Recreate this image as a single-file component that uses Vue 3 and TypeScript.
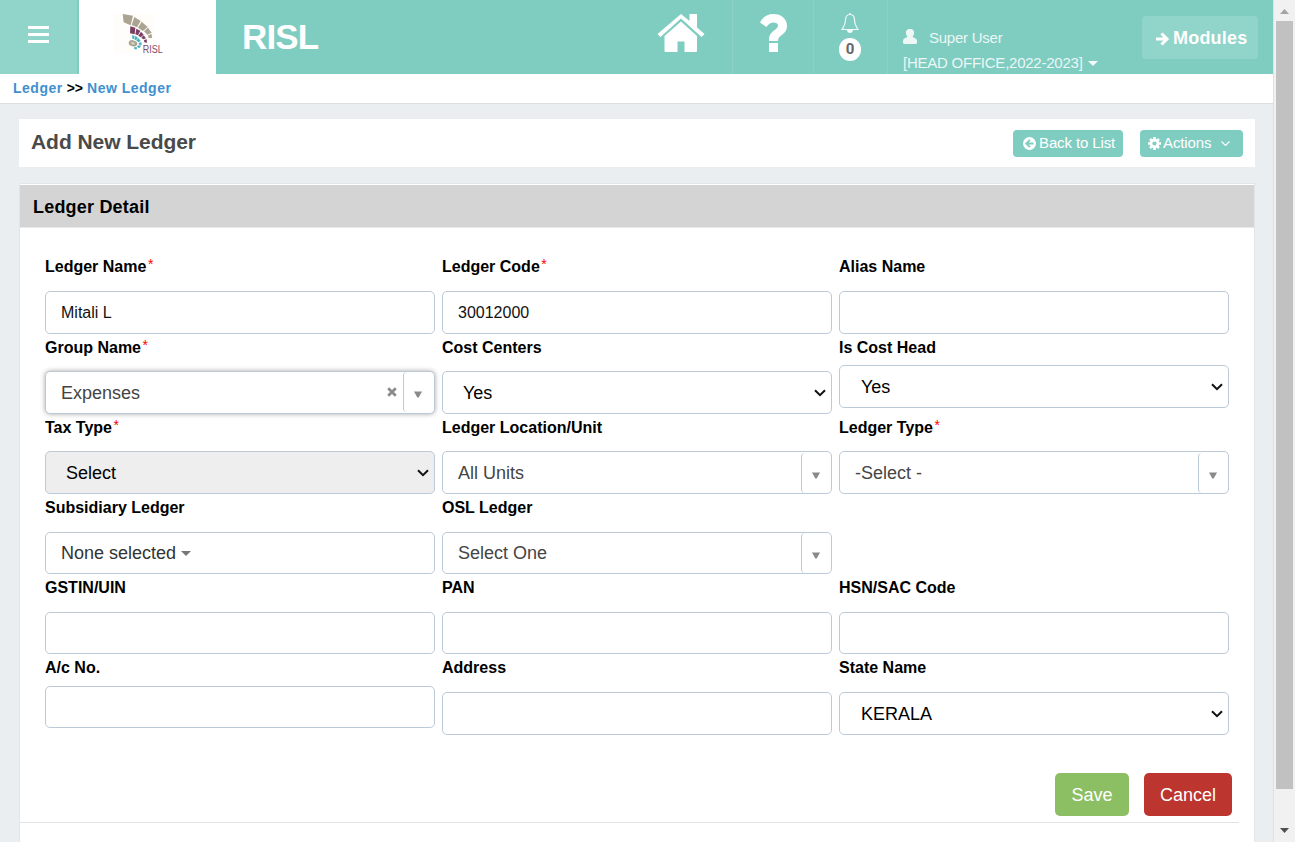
<script setup lang="ts">
type Kind = 'input' | 'native' | 'combo' | 'multi' | 'none'

interface Field {
  label: string
  kind: Kind
  value?: string
  required?: boolean
  disabled?: boolean
  focused?: boolean
  raised?: boolean
}

const fields: Field[] = [
  { label: 'Ledger Name', kind: 'input', value: 'Mitali L', required: true },
  { label: 'Ledger Code', kind: 'input', value: '30012000', required: true },
  { label: 'Alias Name', kind: 'input' },
  { label: 'Group Name', kind: 'combo', value: 'Expenses', required: true, focused: true },
  { label: 'Cost Centers', kind: 'native', value: 'Yes' },
  { label: 'Is Cost Head', kind: 'native', value: 'Yes', raised: true },
  { label: 'Tax Type', kind: 'native', value: 'Select', required: true, disabled: true },
  { label: 'Ledger Location/Unit', kind: 'combo', value: 'All Units' },
  { label: 'Ledger Type', kind: 'combo', value: '-Select -', required: true },
  { label: 'Subsidiary Ledger', kind: 'multi', value: 'None selected' },
  { label: 'OSL Ledger', kind: 'combo', value: 'Select One' },
  { label: '', kind: 'none' },
  { label: 'GSTIN/UIN', kind: 'input' },
  { label: 'PAN', kind: 'input' },
  { label: 'HSN/SAC Code', kind: 'input' },
  { label: 'A/c No.', kind: 'input', raised: true },
  { label: 'Address', kind: 'input' },
  { label: 'State Name', kind: 'native', value: 'KERALA' },
]
</script>

<template>
  <div class="screen">
    <div class="page">
      <header class="topbar">
        <div class="menu">
          <svg width="21" height="17" viewBox="0 0 21 17"><path d="M0 0h21v3H0zM0 7h21v3H0zM0 14h21v3H0z" fill="#fff" /></svg>
        </div>
        <div class="logo">
          <svg width="70" height="50" viewBox="40 40 210 150">
            <rect x="42" y="42" width="122" height="118" fill="#fefdfa" />
            <g fill="#aca493">
              <path d="M69 43L100 48L93 77L72 68z" />
              <path d="M104 52L123 64L112 83L96 76z" />
              <path d="M126 66L144 82L130 94L115 84z" />
              <path d="M145 84L156 99L143 105L133 95z" />
              <path d="M145 107L156 103L157 115L147 115z" />
            </g>
            <g fill="#7b3f65">
              <path d="M92 80L107 84L105 104L91 101z" />
              <path d="M110 87L122 93L115 107L107 104z" />
              <path d="M124 96L132 105L123 113L116 108z" />
              <path d="M132 107L139 116L131 119L125 114z" />
              <path d="M133 121L141 119L142 129L134 128z" />
            </g>
            <g fill="#46b2c4">
              <path d="M97 107L105 108L103 118L98 117z" />
              <path d="M107 109L115 114L109 122L104 119z" />
              <path d="M116 115L123 123L117 128L110 123z" />
              <path d="M117 130L125 127L126 136L118 135z" />
              <path d="M116 137L124 138L119 146L112 141z" />
              <path d="M103 143L111 142L112 149L104 149z" />
            </g>
            <ellipse cx="100" cy="131" rx="13" ry="9" transform="rotate(15 100 131)" fill="#aca493" />
            <ellipse cx="100" cy="131" rx="6" ry="3.5" transform="rotate(15 100 131)" fill="#d8d2c6" />
            <text x="129" y="160" font-size="35" textLength="60" lengthAdjust="spacingAndGlyphs" fill="#7d4a6c" font-family="Liberation Sans, Arial, sans-serif">RISL</text>
          </svg>
        </div>
        <h1 class="brand">RISL</h1>
        <div class="cell home">
          <svg width="48" height="40" viewBox="0 0 48 40" fill="#fff">
            <path d="M24 1L32.500 8V1H40V14.500L47.500 21L44.500 24L24 5.500L3.500 24L0.500 21z" />
            <path d="M24 8.500L40 23V38Q40 39 39 39H27.500V28.500H20.500V39H8.500Q7.500 39 7.500 38V23z" />
          </svg>
        </div>
        <div class="cell help">
          <svg width="29" height="40" viewBox="0 0 29 40" fill="#fff">
            <path d="M1 9.500C4 4 8 1 14.500 1C22 1 28 5.500 28 13C28 18 25 20.500 21.500 23C19.500 24.500 19 26 19 28H10V26C10 22 12 20 15 17.500C17.500 15.500 19 14.500 19 12.500C19 10.500 17 9.500 14.500 9.500C11.500 9.500 9.500 11 7.500 14z" />
            <path d="M10 30h9v9h-9z" />
          </svg>
        </div>
        <div class="cell alerts">
          <svg class="bell" width="18" height="21" viewBox="0 0 18 21">
            <path d="M9 1.500C6 1.500 4.500 4 4.500 7C4.500 12 3 13.500 1 16.500H17C15 13.500 13.500 12 13.500 7C13.500 4 12 1.500 9 1.500z" fill="none" stroke="#f1faf8" stroke-width="1.200" />
            <path d="M8.300 0h1.400v2H8.300zM6 17h6c0 4-6 4-6 0z" fill="#f1faf8" />
          </svg>
          <span class="count">0</span>
        </div>
        <div class="cell user">
          <div class="who">
            <svg width="14" height="15" viewBox="0 0 14 15" fill="#edf8f6"><path d="M7 0C10 0 11.500 2 11 4.500C10.800 6 10 7 9.500 8C12 9 14 9.500 14 12V13.500Q14 15 12.500 15H1.500Q0 15 0 13.500V12C0 9.500 2 9 4.500 8C4 7 3.200 6 3 4.500C2.500 2 4 0 7 0z" /></svg>
            <span>Super User</span>
          </div>
          <div class="office"><span>[HEAD OFFICE,2022-2023]</span><i class="tri"></i></div>
        </div>
        <button class="modules">
          <svg width="13" height="14" viewBox="0 0 13 14"><path d="M0 7H11M5.500 1.500L11 7L5.500 12.500" fill="none" stroke="#fff" stroke-width="3" /></svg>
          <span>Modules</span>
        </button>
      </header>

      <nav class="crumbs"><a>Ledger</a><b>&gt;&gt;</b><a>New Ledger</a></nav>

      <section class="titlebar">
        <h2>Add New Ledger</h2>
        <button class="tool back">
          <svg width="13" height="13" viewBox="0 0 13 13"><circle cx="6.500" cy="6.500" r="6.500" fill="#fff" /><path d="M10.500 6.500H3.500M7 2.800L3.300 6.500L7 10.200" fill="none" stroke="#7fccc1" stroke-width="1.900" /></svg>
          <span>Back to List</span>
        </button>
        <button class="tool actions">
          <svg width="13" height="13" viewBox="0 0 13 13"><g stroke="#fff" stroke-width="2.600"><path d="M6.500 0V13M0 6.500H13M2 2L11 11M11 2L2 11" /></g><circle cx="6.500" cy="6.500" r="4.700" fill="#fff" /><circle cx="6.500" cy="6.500" r="2.100" fill="#7fccc1" /></svg>
          <span>Actions</span>
          <svg class="angle" width="9" height="6" viewBox="0 0 9 6"><path d="M0.500 0.500L4.500 4.500L8.500 0.500" fill="none" stroke="#fff" stroke-width="1.100" /></svg>
        </button>
      </section>

      <section class="panel">
        <h3>Ledger Detail</h3>
        <div class="grid">
          <div v-for="(f, i) in fields" :key="i" class="field" :class="{ raised: f.raised }">
            <template v-if="f.kind !== 'none'">
              <label>{{ f.label }}<sup v-if="f.required">*</sup></label>
              <div class="box" :class="[f.kind, { disabled: f.disabled, focused: f.focused }]">
                <span class="value">{{ f.value }}</span>
                <svg v-if="f.kind === 'native'" class="chev" width="12" height="8" viewBox="0 0 12 8"><path d="M1 1.200L6 6.200L11 1.200" fill="none" stroke="#111" stroke-width="2" /></svg>
                <i v-if="f.kind === 'multi'" class="tri grey"></i>
                <svg v-if="f.focused" class="clear" width="10" height="10" viewBox="0 0 10 10"><path d="M1.200 1.200L8.800 8.800M8.800 1.200L1.200 8.800" stroke="#8b8b8b" stroke-width="2.800" /></svg>
                <div v-if="f.kind === 'combo'" class="drop">
                  <svg width="8" height="7" viewBox="0 0 8 7"><path d="M0 0.500H8L4.700 6.500H3.300z" fill="#8a8a8a" /></svg>
                </div>
              </div>
            </template>
          </div>
        </div>
        <div class="buttons">
          <button class="save">Save</button>
          <button class="cancel">Cancel</button>
        </div>
      </section>
    </div>

    <aside class="scroll">
      <svg width="9" height="5" viewBox="0 0 9 5"><path d="M0 5L4.500 0L9 5z" fill="#a3a3a3" /></svg>
      <div class="thumb"></div>
      <svg class="down" width="9" height="5" viewBox="0 0 9 5"><path d="M0 0L4.500 5L9 0z" fill="#505050" /></svg>
    </aside>
  </div>
</template>

<style>
body { margin: 0; overflow: hidden; }
</style>

<style scoped>
* { box-sizing: border-box; }
svg { display: block; flex: none; overflow: visible; }
h1, h2, h3 { margin: 0; }
button { border: 0; padding: 0; font-family: inherit; display: flex; align-items: center; color: #fff; }
.screen { display: flex; width: 1295px; height: 842px; overflow: hidden; background: #eaeef1; font-family: "Liberation Sans", Arial, sans-serif; color: #000; }
.page { width: 1273px; height: 842px; display: flex; flex-direction: column; overflow: hidden; }

.topbar { display: flex; flex: none; height: 74px; background: #7fccc1; }
.menu { width: 77px; background: #90d4ca; padding: 26px 0 0 28px; }
.logo { width: 137px; margin-left: 2px; background: #fff; padding: 13px 0 0 34px; }
.brand { width: 431px; padding: 17px 0 0 26px; font-size: 35px; line-height: 40px; font-weight: 700; letter-spacing: -0.9px; color: #fff; }
.cell { flex: none; }
.home { width: 85px; padding: 13px 0 0 10px; }
.help { width: 81px; border-left: 1px solid #8cd1c7; padding: 13px 0 0 26px; }
.alerts { width: 74px; border-left: 1px solid #8cd1c7; padding-left: 25px; }
.bell { margin: 13px 0 0 2px; }
.count { display: block; width: 22px; height: 23px; margin-top: 4px; border-radius: 11px; background: #fff; color: #666; font: 700 15px/23px Roboto, "Liberation Sans", sans-serif; text-align: center; }
.user { width: 255px; border-left: 1px solid #8cd1c7; padding: 28px 0 0 15px; color: #eaf7f5; font-size: 15px; letter-spacing: -0.24px; }
.who { display: flex; height: 20px; line-height: 20px; gap: 12px; }
.who svg { margin-top: 1px; }
.office { display: flex; height: 20px; line-height: 20px; margin-top: 5px; }
.tri { width: 0; height: 0; border: 5px solid transparent; border-top-color: #f4fbfa; border-bottom: 0; margin: 8px 0 0 5px; }
.modules { width: 116px; height: 43px; margin-top: 16px; border-radius: 4px; background: #90d4ca; padding-left: 14px; gap: 4px; font-size: 18px; font-weight: 700; letter-spacing: 0.2px; }
.modules svg { margin-top: 3px; }
.modules span { padding-top: 2px; }

.crumbs { flex: none; height: 30px; background: #fff; border-bottom: 1px solid #dcdfe2; padding: 4px 0 0 13px; display: flex; font-size: 14px; line-height: 20px; font-weight: 700; letter-spacing: 0.5px; color: #4190d0; }
.crumbs b { margin: 0 4px 0 4px; color: #000; letter-spacing: 0; }

.titlebar { flex: none; display: flex; width: 1236px; height: 48px; margin: 15px 0 0 19px; background: #fff; padding: 11px 12px 0; }
.titlebar h2 { flex: 1; font-size: 21px; line-height: 24px; letter-spacing: -0.05px; color: #4a4a4a; }
.tool { height: 27px; border-radius: 4px; background: #7fccc1; font-size: 15px; letter-spacing: -0.12px; }
.tool span { padding-bottom: 2px; }
.back { width: 110px; padding-left: 10px; gap: 3px; }
.actions { width: 103px; margin-left: 17px; padding-left: 8px; gap: 2px; }
.angle { margin-left: 8px; }

.panel { flex: none; width: 1236px; height: 680px; margin: 16px 0 0 19px; border: 1px solid #e3e5e7; padding-top: 1px; background: #fff; }
.panel h3 { height: 43px; background: #d4d4d4; border-bottom: 1px solid #e9e9e9; padding-left: 13px; font-size: 18px; line-height: 45px; letter-spacing: 0.2px; }
.grid { display: grid; grid-template-columns: repeat(3, 390px); grid-auto-rows: 80.22px; column-gap: 7px; padding: 25.35px 0 0 25px; height: 545px; }
.field label { display: block; height: 37.6px; font-size: 16px; line-height: 28px; font-weight: 700; white-space: nowrap; }
.field sup { font-size: 14px; line-height: 0; vertical-align: 3px; font-weight: 400; color: #f00; margin-left: 1.5px; }
.raised label { height: 31.4px; }
.box { height: 42.6px; border: 1px solid #bccad7; border-radius: 5px; padding-left: 15px; display: flex; align-items: center; background: #fff; font-size: 18px; color: #444; }
.box.input { font-size: 16px; color: #111; }
.box.native { padding: 0 5px 0 20px; color: #000; }
.field:nth-child(3n) .box.native { padding-left: 21px; }
.box.multi { color: #333; }
.box.disabled { background: #eee; }
.box.focused { box-shadow: 0 0 5px rgba(0, 0, 0, 0.35); }
.value { white-space: pre; padding-top: 2px; }
.chev { margin-left: auto; margin-top: 1px; }
.grey { border-top-color: #777; margin: 2px 0 0 5px; }
.clear { margin-left: auto; margin-top: -1px; margin-right: 6px; }
.drop { width: 31px; height: 40px; border-left: 1px solid #bccad7; border-radius: 4px; padding: 19px 0 0 10px; }
.combo:not(.focused) .drop { margin-left: auto; width: 30px; }
.buttons { display: flex; justify-content: flex-end; width: 1219px; height: 50px; padding-right: 7px; border-bottom: 1px solid #e3e3e3; }
.buttons button { height: 43px; padding-top: 2px; border-radius: 5px; justify-content: center; font-size: 18px; }
.save { width: 74px; margin-right: 15px; background: #8cbf63; }
.cancel { width: 88px; background: #bc352f; }

.scroll { width: 22px; height: 842px; background: #f1f1f1; border-left: 1px solid #dfe1e3; display: flex; flex-direction: column; padding-top: 9px; }
.scroll svg { margin-left: 6px; }
.thumb { width: 17px; height: 768px; margin: 7px 0 0 2px; background: #c1c1c1; }
.scroll .down { margin-top: 39px; }
</style>
